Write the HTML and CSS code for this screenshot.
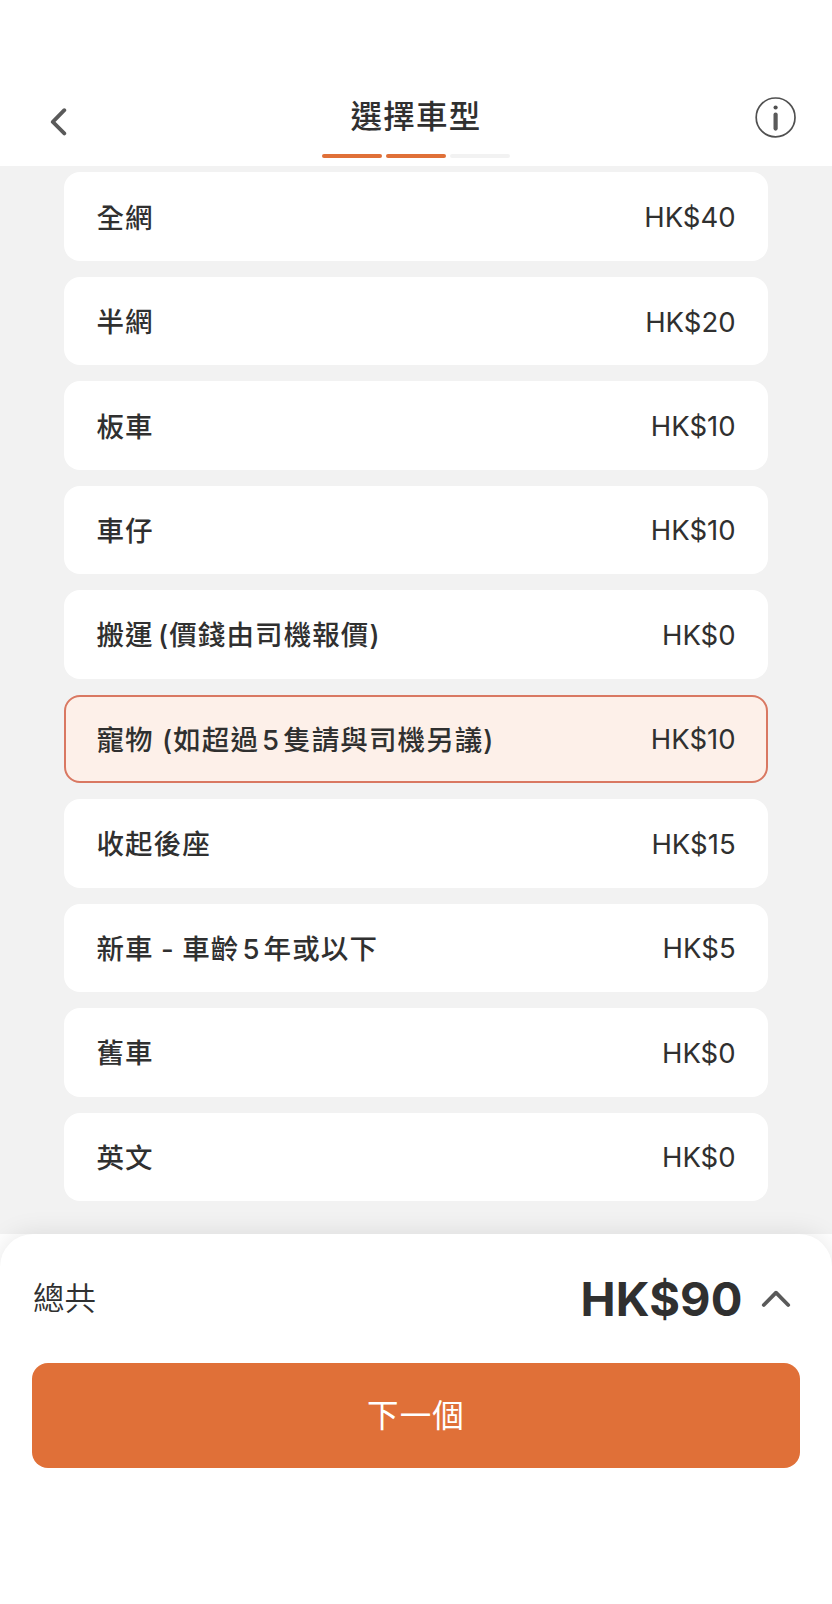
FILE: index.html
```html
<!DOCTYPE html>
<html lang="zh-Hant">
<head>
    <meta charset="UTF-8">
    <meta name="viewport" content="width=device-width, initial-scale=1.0">
    <title>選擇車型</title>
    <link rel="stylesheet" href="styles.css">
</head>
<body>
    <header class="header">
        <button class="icon-btn back-btn" aria-label="返回">
            <svg width="17" height="28" viewBox="0 0 17 28">
                <path d="M14.3 2.2L2.8 13.9L14.3 25.4" />
            </svg>
        </button>
        <div class="header-center">
            <h1 class="title">選擇車型</h1>
            <div class="steps">
                <span class="step done"></span>
                <span class="step done"></span>
                <span class="step"></span>
            </div>
        </div>
        <button class="icon-btn info-btn" aria-label="資訊">
            <svg width="42" height="42" viewBox="0 0 42 42">
                <circle class="ring" cx="20.6" cy="20.4" r="19.4" />
                <circle class="dot" cx="20.6" cy="10.5" r="2.1" />
                <path class="stem" d="M20.6 17.6V31.6" />
            </svg>
        </button>
    </header>

    <main class="content">
        <ul class="options">
            <li class="option"><span class="name">全網</span><span class="price">HK$40</span></li>
            <li class="option"><span class="name">半網</span><span class="price">HK$20</span></li>
            <li class="option"><span class="name">板車</span><span class="price">HK$10</span></li>
            <li class="option"><span class="name">車仔</span><span class="price">HK$10</span></li>
            <li class="option"><span class="name tight">搬運 (價錢由司機報價)</span><span class="price">HK$0</span></li>
            <li class="option selected"><span class="name">寵物 (如超過<span class="num">5</span>隻請與司機另議)</span><span class="price">HK$10</span></li>
            <li class="option"><span class="name">收起後座</span><span class="price">HK$15</span></li>
            <li class="option"><span class="name dashed">新車 - 車齡<span class="num">5</span>年或以下</span><span class="price">HK$5</span></li>
            <li class="option"><span class="name">舊車</span><span class="price">HK$0</span></li>
            <li class="option"><span class="name">英文</span><span class="price">HK$0</span></li>
        </ul>
    </main>

    <footer class="summary">
        <div class="total">
            <span class="total-label">總共</span>
            <span class="total-price">HK$90</span>
            <svg class="chevron" width="30" height="18" viewBox="0 0 30 18">
                <path d="M2.8 15L15 2.7L27.2 15" />
            </svg>
        </div>
        <button class="next-btn">下一個</button>
    </footer>
</body>
</html>
```
FILE: styles.css
```css
* {
    box-sizing: border-box;
}

body {
    margin: 0;
    height: 1604px;
    display: flex;
    flex-direction: column;
    background-color: #fff;
    color: #303030;
    font-family: Inter, "Noto Sans CJK TC", sans-serif;
    overflow: hidden;
}

button {
    border: 0;
    padding: 0;
    background: none;
    font-family: inherit;
}

/* header */
.header {
    height: 166px;
    flex: none;
    display: grid;
    grid-template-columns: 1fr auto 1fr;
    align-items: start;
    padding: 97px 35px 0 50px;
}

.icon-btn {
    display: block;
    line-height: 0;
}

.icon-btn path,
.chevron path {
    fill: none;
    stroke: #5a5a5a;
    stroke-width: 3.8;
    stroke-linecap: round;
    stroke-linejoin: round;
}

.back-btn {
    justify-self: start;
    margin-top: 10.5px;
}

.info-btn {
    justify-self: end;
}

.info-btn .ring {
    fill: none;
    stroke: #505050;
    stroke-width: 1.7;
}

.info-btn .dot {
    fill: #505050;
}

.info-btn .stem {
    stroke-width: 4.2;
}

.header-center {
    width: 190px;
    margin-right: 15px;
    display: flex;
    flex-direction: column;
    align-items: center;
}

.title {
    margin: 0;
    height: 56.5px;
    padding-top: 1px;
    line-height: 38px;
    font-size: 31.5px;
    font-weight: 500;
    letter-spacing: 1.2px;
}

.steps {
    display: flex;
    gap: 4px;
}

.step {
    width: 60px;
    height: 4px;
    border-radius: 2px;
    background-color: #f2f2f2;
}

.step.done {
    background-color: #e07038;
}

/* option list */
.content {
    height: 1068px;
    flex: none;
    padding: 6.4px 64.4px 0;
    background-color: #f2f2f2;
}

.options {
    margin: 0;
    padding: 0;
    list-style: none;
    display: flex;
    flex-direction: column;
    gap: 16.2px;
}

.option {
    height: 88.3px;
    display: flex;
    align-items: center;
    justify-content: space-between;
    padding: 0 32px;
    border-radius: 16px;
    background-color: #fff;
}

.option.selected {
    padding: 0 30px;
    border: 2px solid #d97862;
    background-color: #fdf0e9;
}

.name {
    padding-bottom: 2px;
    font-size: 27.5px;
    font-weight: 500;
    letter-spacing: 1.1px;
    white-space: nowrap;
}

.tight {
    word-spacing: -4px;
}

.dashed {
    word-spacing: -1px;
}

.num {
    margin: 0 3px;
}

.price {
    padding-top: 1px;
    font-size: 27.5px;
}

/* bottom panel */
.summary {
    flex: 1;
    padding: 0 32px;
    border-radius: 33px 33px 0 0;
    background-color: #fff;
    box-shadow: 0 0 26px rgba(0, 0, 0, 0.1);
}

.total {
    height: 129px;
    display: flex;
    align-items: center;
}

.total-label {
    flex: 1;
    padding: 0 0 5px 1px;
    font-size: 31.5px;
    font-weight: 350;
}

.total-price {
    font-size: 47px;
    font-weight: 700;
    letter-spacing: 0.1px;
}

.chevron {
    margin: 0 9px 0 18.5px;
}

.next-btn {
    display: block;
    width: 100%;
    height: 105px;
    padding-bottom: 5px;
    border-radius: 16px;
    background-color: #e07038;
    color: #fff;
    font-size: 31.5px;
    letter-spacing: 1.2px;
}
```
